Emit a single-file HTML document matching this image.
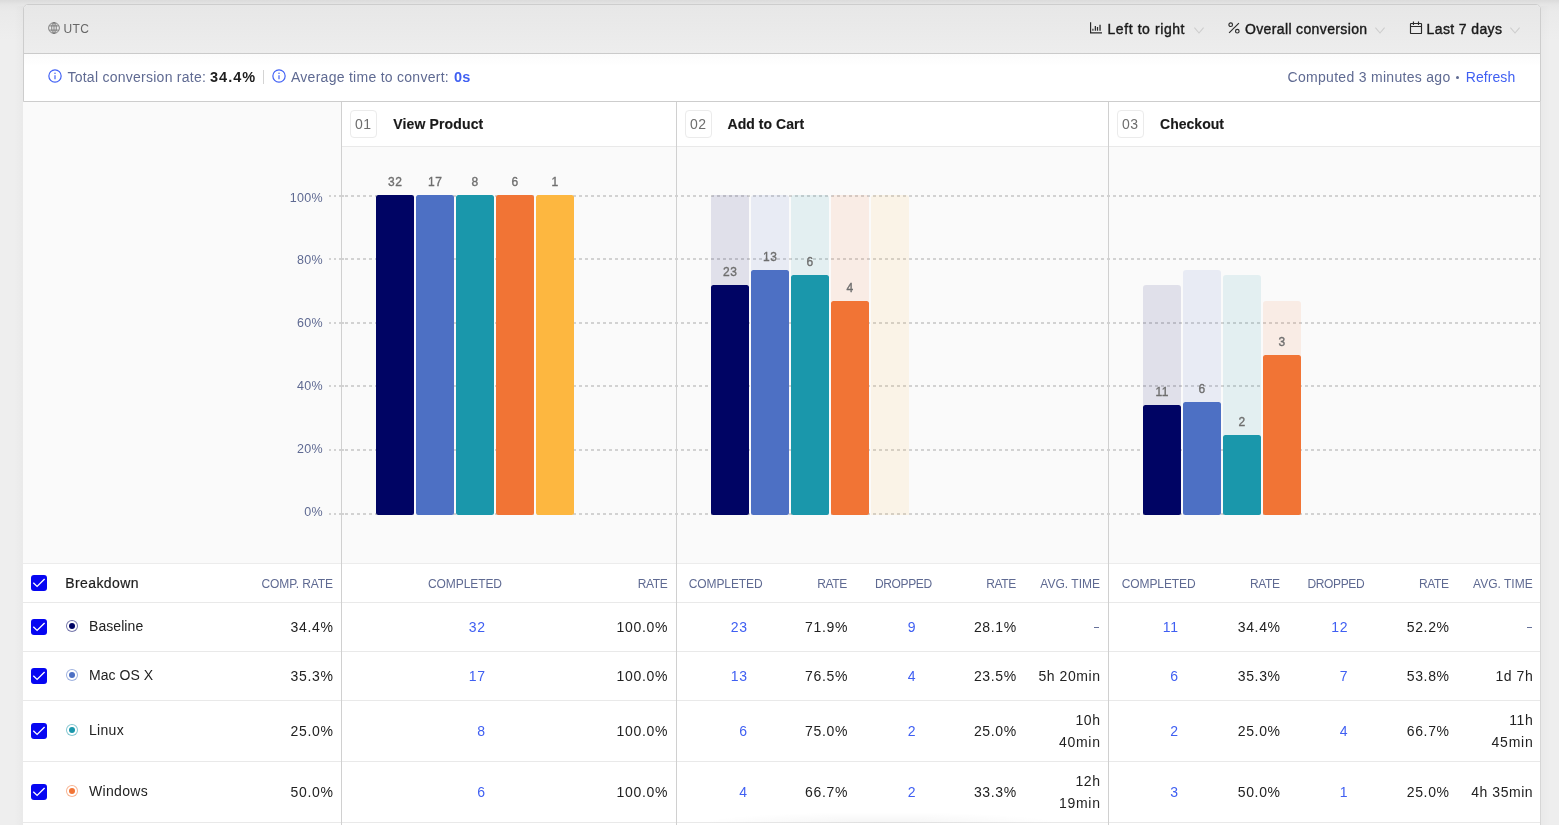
<!DOCTYPE html>
<html><head><meta charset="utf-8"><title>Funnel</title>
<style>
*{box-sizing:border-box;margin:0;padding:0}
html,body{width:1559px;height:825px;overflow:hidden}
body{background:#eeeeee;font-family:"Liberation Sans",sans-serif;font-size:14px;color:#222;position:relative}
.topshade{position:absolute;left:0;top:0;width:1559px;height:40px;background:linear-gradient(#dbdbdb 0,#e6e6e6 5px,#eaeaea 12px,#eeeeee 40px)}
.lshade{position:absolute;left:14px;top:6px;width:9px;height:830px;background:linear-gradient(to right,rgba(0,0,0,0),rgba(0,0,0,.02))}
.rshade{position:absolute;left:1541px;top:6px;width:9px;height:830px;background:linear-gradient(to left,rgba(0,0,0,0),rgba(0,0,0,.02))}
.card{position:absolute;left:24px;top:5px;width:1516px;height:830px}
.topbox{position:absolute;left:-1px;top:-1px;width:1518px;height:98px;border:1px solid #cdcdcd;border-radius:5px 5px 0 0;background:#fff;overflow:hidden}
.abs,.t{position:absolute;white-space:nowrap}
.txt{position:absolute;left:0;top:0;width:1516px;height:830px;will-change:transform}
.hdr{position:absolute;left:0;top:0;width:1516px;height:49px;background:linear-gradient(#e7e7e7,#ededed);border-bottom:1px solid #cacaca}
.stats{position:absolute;left:0;top:49px;width:1516px;height:47px;background:linear-gradient(#fbfbfb,#fff 12px)}
.chartbg{position:absolute;left:-1px;top:97px;width:1517px;height:462px;background:#fafafa;border-bottom:1px solid #ececec}
.rborder{position:absolute;left:1516px;top:97px;width:1px;height:740px;background:#d6d6d6}
.vline{position:absolute;top:97px;width:1px;height:760px;background:#d0d0d0}
.stephead{position:absolute;top:97px;height:45px;background:#fff;border-bottom:1px solid #e9e9e9}
.num{position:absolute;width:27px;height:28px;border:1px solid #ebebeb;border-radius:4px;background:#fff}
.grid{position:absolute;height:2px;background:repeating-linear-gradient(to right,#d2d2d2 0,#d2d2d2 3px,transparent 3px,transparent 6px)}
.gd{position:absolute;width:2px;height:2px;background:#d2d2d2}
.bar{position:absolute;width:38px;border-radius:2.5px}
.bk{position:absolute;width:38px;border-radius:3px 3px 0 0;opacity:.10}
.row{position:absolute;left:-1px;width:1517px;border-bottom:1px solid #e9e9e9;background:#fff}
.cb{position:absolute;width:16px;height:16px;border-radius:3px;background:#0606f2}
.cb svg{position:absolute;left:0;top:0}
.dot{position:absolute;width:12px;height:12px;border-radius:50%;border:1px solid;background:#fff}
.dot i{position:absolute;left:2px;top:2px;width:6px;height:6px;border-radius:50%}
/* text classes */
.hb{font-size:14px;line-height:20px;color:#1a1a1a;-webkit-text-stroke:.4px #1a1a1a}
.utc{font-size:12px;line-height:16px;color:#666}
.st{font-size:14px;line-height:20px}
.nm{font-size:14px;line-height:24px;color:#6e6e6e}
.stitle{font-weight:bold;font-size:14px;line-height:20px;color:#1a1a1a;-webkit-text-stroke:.15px #1a1a1a}
.ylab{font-size:12.5px;line-height:16px;color:#5f6a92}
.blab{font-size:12px;line-height:14px;color:#6e6e6e;-webkit-text-stroke:.35px #6e6e6e}
.th{font-size:12px;line-height:16px;color:#5f6a92}
.td{font-size:14px;line-height:22px;color:#222}
.bd{font-size:14px;line-height:20px;color:#1d1d1d;-webkit-text-stroke:.2px #1d1d1d}
.b{font-weight:bold;color:#1d1d1d}
.mut{color:#5f6a92}
.lk{color:#3f5ff2}
.sb{font-size:14.5px}
</style></head>
<body>
<div class="topshade"></div><div class="lshade"></div><div class="rshade"></div>
<div class="card">
<div class="topbox"><div class="hdr"></div><div class="stats"></div></div><div class="chartbg"></div><div class="rborder"></div>
<svg class="abs" style="left:24px;top:17px" width="12" height="12" viewBox="0 0 12 12" fill="none" stroke="#707070" stroke-width="0.85"><circle cx="6" cy="6" r="5.4"/><ellipse cx="6" cy="6" rx="2.3" ry="5.4"/><path d="M1.3 3.9h9.4M1.3 8.1h9.4M6 .6v10.8"/></svg>
<svg class="abs" style="left:1066px;top:17px" width="12" height="12" viewBox="0 0 12 12" fill="none" stroke="#2a2a2a"><path d="M0.55 0.3V10.85H12" stroke-width="1.25"/><path d="M2.9 8.8V6.8" stroke-width="1.5" stroke="#555"/><path d="M5.35 8.8V4.1M7.5 8.8V5.1" stroke-width="1.25"/><path d="M10.05 8.8V2.7" stroke-width="1.7" stroke="#555"/></svg>
<svg class="abs" style="left:1170px;top:21.5px" width="10" height="7" viewBox="0 0 10 7" fill="none" stroke="#cdcdcd" stroke-width="1.1"><path d="M0.4 0.6L5 6L9.6 0.6"/></svg>
<svg class="abs" style="left:1204px;top:17px" width="12" height="12" viewBox="0 0 12 12" fill="none" stroke="#2a2a2a" stroke-width="1.15"><circle cx="2.7" cy="2.7" r="1.8"/><circle cx="9.3" cy="9.2" r="1.8"/><path d="M1.1 10.8L10.9 1.1"/></svg>
<svg class="abs" style="left:1351.3px;top:21.5px" width="10" height="7" viewBox="0 0 10 7" fill="none" stroke="#cdcdcd" stroke-width="1.1"><path d="M0.4 0.6L5 6L9.6 0.6"/></svg>
<svg class="abs" style="left:1385px;top:16px" width="14" height="14" viewBox="0 0 14 14" fill="none" stroke="#2a2a2a" stroke-width="1.15"><rect x="1.5" y="2.5" width="11" height="10" rx="0.6"/><path d="M1.5 5.5H12.5M4.45 0.5V3.9M9.5 0.5V3.9"/></svg>
<svg class="abs" style="left:1486.3px;top:21.5px" width="10" height="7" viewBox="0 0 10 7" fill="none" stroke="#cdcdcd" stroke-width="1.1"><path d="M0.4 0.6L5 6L9.6 0.6"/></svg>
<svg class="abs" style="left:24px;top:64px" width="14" height="14" viewBox="0 0 14 14" fill="none" stroke="#4262f5" stroke-width="1.2"><circle cx="7" cy="7" r="6.15"/><path d="M7 6.2V10.3" stroke-width="1.2"/><circle cx="7" cy="4.2" r="0.75" fill="#3f5ff2" stroke="none"/></svg>
<div class="abs" style="left:239px;top:65px;width:1px;height:14px;background:#d4d4d4"></div>
<svg class="abs" style="left:248px;top:64px" width="14" height="14" viewBox="0 0 14 14" fill="none" stroke="#4262f5" stroke-width="1.2"><circle cx="7" cy="7" r="6.15"/><path d="M7 6.2V10.3" stroke-width="1.2"/><circle cx="7" cy="4.2" r="0.75" fill="#3f5ff2" stroke="none"/></svg>
<div class="abs" style="left:1431.5px;top:70.5px;width:3.5px;height:3.5px;border-radius:50%;background:#5f6a92"></div>
<div class="stephead" style="left:318px;width:334px"></div>
<div class="num" style="left:326px;top:105px"></div>
<div class="stephead" style="left:653px;width:431px"></div>
<div class="num" style="left:661px;top:105px"></div>
<div class="stephead" style="left:1085px;width:431px"></div>
<div class="num" style="left:1093px;top:105px"></div>
<div class="gd" style="left:305px;top:190px"></div>
<div class="gd" style="left:310px;top:190px"></div>
<div class="grid" style="left:315px;top:190px;width:1201px"></div>
<div class="gd" style="left:318px;top:190px"></div>
<div class="gd" style="left:305px;top:253px"></div>
<div class="gd" style="left:310px;top:253px"></div>
<div class="grid" style="left:315px;top:253px;width:1201px"></div>
<div class="gd" style="left:318px;top:253px"></div>
<div class="gd" style="left:305px;top:317px"></div>
<div class="gd" style="left:310px;top:317px"></div>
<div class="grid" style="left:315px;top:317px;width:1201px"></div>
<div class="gd" style="left:318px;top:317px"></div>
<div class="gd" style="left:305px;top:380px"></div>
<div class="gd" style="left:310px;top:380px"></div>
<div class="grid" style="left:315px;top:380px;width:1201px"></div>
<div class="gd" style="left:318px;top:380px"></div>
<div class="gd" style="left:305px;top:444px"></div>
<div class="gd" style="left:310px;top:444px"></div>
<div class="grid" style="left:315px;top:444px;width:1201px"></div>
<div class="gd" style="left:318px;top:444px"></div>
<div class="gd" style="left:305px;top:508px"></div>
<div class="gd" style="left:310px;top:508px"></div>
<div class="grid" style="left:315px;top:508px;width:1201px"></div>
<div class="gd" style="left:318px;top:508px"></div>
<div class="bar" style="left:352px;top:190px;height:320px;background:#000464"></div>
<div class="bar" style="left:392px;top:190px;height:320px;background:#4d70c4"></div>
<div class="bar" style="left:432px;top:190px;height:320px;background:#1a97ab"></div>
<div class="bar" style="left:472px;top:190px;height:320px;background:#f17435"></div>
<div class="bar" style="left:512px;top:190px;height:320px;background:#fdb740"></div>
<div class="bk" style="left:687px;top:190px;height:320px;background:#000464"></div>
<div class="bar" style="left:687px;top:280px;height:230px;background:#000464"></div>
<div class="bk" style="left:727px;top:190px;height:320px;background:#4d70c4"></div>
<div class="bar" style="left:727px;top:265px;height:245px;background:#4d70c4"></div>
<div class="bk" style="left:767px;top:190px;height:320px;background:#1a97ab"></div>
<div class="bar" style="left:767px;top:270px;height:240px;background:#1a97ab"></div>
<div class="bk" style="left:807px;top:190px;height:320px;background:#f17435"></div>
<div class="bar" style="left:807px;top:296px;height:214px;background:#f17435"></div>
<div class="bk" style="left:847px;top:190px;height:320px;background:#fdb740"></div>
<div class="bk" style="left:1119px;top:280px;height:230px;background:#000464"></div>
<div class="bar" style="left:1119px;top:400px;height:110px;background:#000464"></div>
<div class="bk" style="left:1159px;top:265px;height:245px;background:#4d70c4"></div>
<div class="bar" style="left:1159px;top:397px;height:113px;background:#4d70c4"></div>
<div class="bk" style="left:1199px;top:270px;height:240px;background:#1a97ab"></div>
<div class="bar" style="left:1199px;top:430px;height:80px;background:#1a97ab"></div>
<div class="bk" style="left:1239px;top:296px;height:214px;background:#f17435"></div>
<div class="bar" style="left:1239px;top:350px;height:160px;background:#f17435"></div>
<div class="row" style="top:559px;height:39px"></div>
<div class="cb" style="left:7px;top:570px"><svg width="16" height="16" viewBox="0 0 16 16" fill="none" stroke="#fff" stroke-width="1.35"><path d="M2.3 7.8L6.1 11.4L13.6 3.9"/></svg></div>
<div class="row" style="top:598px;height:49px"></div>
<div class="cb" style="left:7px;top:614px"><svg width="16" height="16" viewBox="0 0 16 16" fill="none" stroke="#fff" stroke-width="1.35"><path d="M2.3 7.8L6.1 11.4L13.6 3.9"/></svg></div>
<div class="dot" style="left:42px;top:615px;border-color:#00046488"><i style="background:#000464"></i></div>
<div class="abs" style="left:1069.9px;top:621.6px;width:5.4px;height:1.4px;background:#66719a"></div>
<div class="abs" style="left:1502.6px;top:621.6px;width:5.4px;height:1.4px;background:#66719a"></div>
<div class="row" style="top:647px;height:49px"></div>
<div class="cb" style="left:7px;top:663px"><svg width="16" height="16" viewBox="0 0 16 16" fill="none" stroke="#fff" stroke-width="1.35"><path d="M2.3 7.8L6.1 11.4L13.6 3.9"/></svg></div>
<div class="dot" style="left:42px;top:664px;border-color:#4d70c488"><i style="background:#4d70c4"></i></div>
<div class="row" style="top:696px;height:61px"></div>
<div class="cb" style="left:7px;top:718px"><svg width="16" height="16" viewBox="0 0 16 16" fill="none" stroke="#fff" stroke-width="1.35"><path d="M2.3 7.8L6.1 11.4L13.6 3.9"/></svg></div>
<div class="dot" style="left:42px;top:719px;border-color:#1a97ab88"><i style="background:#1a97ab"></i></div>
<div class="row" style="top:757px;height:61px"></div>
<div class="cb" style="left:7px;top:779px"><svg width="16" height="16" viewBox="0 0 16 16" fill="none" stroke="#fff" stroke-width="1.35"><path d="M2.3 7.8L6.1 11.4L13.6 3.9"/></svg></div>
<div class="dot" style="left:42px;top:780px;border-color:#f1743588"><i style="background:#f17435"></i></div>
<div class="row" style="top:818px;height:20px"></div>
<div class="abs" style="left:676px;top:807px;width:360px;height:11px;background:radial-gradient(ellipse 50% 100% at 50% 100%,rgba(0,0,0,.045),rgba(0,0,0,0))"></div>
<div class="rborder"></div>
<div class="vline" style="left:317px"></div>
<div class="vline" style="left:652px"></div>
<div class="vline" style="left:1084px"></div>
<div class="txt">
<span class="t utc" style="left:39.5px;top:16px;letter-spacing:0.41px;">UTC</span>
<span class="t hb" style="left:1083.5px;top:14px;letter-spacing:0.58px;">Left to right</span>
<span class="t hb" style="left:1221.0px;top:14px;letter-spacing:0.36px;">Overall conversion</span>
<span class="t hb" style="left:1402.6px;top:14px;letter-spacing:0.38px;">Last 7 days</span>
<span class="t st mut" style="left:43.4px;top:62px;letter-spacing:0.26px;">Total conversion rate:</span>
<span class="t st b sb" style="left:186.0px;top:62px;letter-spacing:1.02px;">34.4%</span>
<span class="t st mut" style="left:267.0px;top:62px;letter-spacing:0.27px;">Average time to convert:</span>
<span class="t st b lk sb" style="left:430.0px;top:62px;letter-spacing:0.20px;">0s</span>
<span class="t st mut" style="left:1263.5px;top:62px;letter-spacing:0.30px;">Computed 3 minutes ago</span>
<span class="t st lk" style="left:1441.8px;top:62px;letter-spacing:0.06px;">Refresh</span>
<span class="t nm" style="left:331.0px;top:107px;letter-spacing:0.42px;">01</span>
<span class="t stitle" style="left:369.3px;top:109px;letter-spacing:0.14px;">View Product</span>
<span class="t nm" style="left:666.0px;top:107px;letter-spacing:0.42px;">02</span>
<span class="t stitle" style="left:703.6px;top:109px;letter-spacing:0.03px;">Add to Cart</span>
<span class="t nm" style="left:1098.0px;top:107px;letter-spacing:0.42px;">03</span>
<span class="t stitle" style="left:1136.0px;top:109px;letter-spacing:0.03px;">Checkout</span>
<span class="t ylab" style="left:265.7px;top:185px;letter-spacing:0.30px;">100%</span>
<span class="t ylab" style="left:273.0px;top:247px;letter-spacing:0.30px;">80%</span>
<span class="t ylab" style="left:273.0px;top:310px;letter-spacing:0.30px;">60%</span>
<span class="t ylab" style="left:273.0px;top:373px;letter-spacing:0.30px;">40%</span>
<span class="t ylab" style="left:273.0px;top:436px;letter-spacing:0.30px;">20%</span>
<span class="t ylab" style="left:280.2px;top:499px;letter-spacing:0.30px;">0%</span>
<span class="t blab" style="left:364.0px;top:170px;letter-spacing:0.50px;">32</span>
<span class="t blab" style="left:404.0px;top:170px;letter-spacing:0.50px;">17</span>
<span class="t blab" style="left:447.6px;top:170px;letter-spacing:0.50px;">8</span>
<span class="t blab" style="left:487.6px;top:170px;letter-spacing:0.50px;">6</span>
<span class="t blab" style="left:527.6px;top:170px;letter-spacing:0.50px;">1</span>
<span class="t blab" style="left:699.0px;top:260px;letter-spacing:0.50px;">23</span>
<span class="t blab" style="left:739.0px;top:245px;letter-spacing:0.50px;">13</span>
<span class="t blab" style="left:782.6px;top:250px;letter-spacing:0.50px;">6</span>
<span class="t blab" style="left:822.6px;top:276px;letter-spacing:0.50px;">4</span>
<span class="t blab" style="left:1131.4px;top:380px;letter-spacing:0.50px;">11</span>
<span class="t blab" style="left:1174.6px;top:377px;letter-spacing:0.50px;">6</span>
<span class="t blab" style="left:1214.6px;top:410px;letter-spacing:0.50px;">2</span>
<span class="t blab" style="left:1254.6px;top:330px;letter-spacing:0.50px;">3</span>
<span class="t bd" style="left:41.2px;top:568px;letter-spacing:0.42px;">Breakdown</span>
<span class="t th" style="left:237.5px;top:571px;letter-spacing:-0.07px;">COMP. RATE</span>
<span class="t th" style="left:404.0px;top:571px;letter-spacing:-0.09px;">COMPLETED</span>
<span class="t th" style="left:613.7px;top:571px;letter-spacing:-0.38px;">RATE</span>
<span class="t th" style="left:664.7px;top:571px;letter-spacing:-0.09px;">COMPLETED</span>
<span class="t th" style="left:793.2px;top:571px;letter-spacing:-0.38px;">RATE</span>
<span class="t th" style="left:850.9px;top:571px;letter-spacing:-0.34px;">DROPPED</span>
<span class="t th" style="left:962.2px;top:571px;letter-spacing:-0.38px;">RATE</span>
<span class="t th" style="left:1016.3px;top:571px;letter-spacing:0.02px;">AVG. TIME</span>
<span class="t th" style="left:1097.7px;top:571px;letter-spacing:-0.09px;">COMPLETED</span>
<span class="t th" style="left:1226.0px;top:571px;letter-spacing:-0.38px;">RATE</span>
<span class="t th" style="left:1283.4px;top:571px;letter-spacing:-0.34px;">DROPPED</span>
<span class="t th" style="left:1395.0px;top:571px;letter-spacing:-0.38px;">RATE</span>
<span class="t th" style="left:1449.0px;top:571px;letter-spacing:0.02px;">AVG. TIME</span>
<span class="t td" style="left:65.0px;top:610px;letter-spacing:0.07px;">Baseline</span>
<span class="t td" style="left:266.6px;top:611px;letter-spacing:0.66px;">34.4%</span>
<span class="t td lk" style="left:444.8px;top:611px;letter-spacing:0.60px;">32</span>
<span class="t td" style="left:592.6px;top:611px;letter-spacing:0.68px;">100.0%</span>
<span class="t td lk" style="left:706.8px;top:611px;letter-spacing:0.60px;">23</span>
<span class="t td" style="left:781.0px;top:611px;letter-spacing:0.66px;">71.9%</span>
<span class="t td lk" style="left:883.7px;top:611px;">9</span>
<span class="t td" style="left:949.9px;top:611px;letter-spacing:0.66px;">28.1%</span>
<span class="t td lk" style="left:1138.8px;top:611px;letter-spacing:0.60px;">11</span>
<span class="t td" style="left:1213.7px;top:611px;letter-spacing:0.66px;">34.4%</span>
<span class="t td lk" style="left:1307.3px;top:611px;letter-spacing:0.60px;">12</span>
<span class="t td" style="left:1382.7px;top:611px;letter-spacing:0.66px;">52.2%</span>
<span class="t td" style="left:65.0px;top:659px;letter-spacing:0.03px;">Mac OS X</span>
<span class="t td" style="left:266.6px;top:660px;letter-spacing:0.66px;">35.3%</span>
<span class="t td lk" style="left:444.8px;top:660px;letter-spacing:0.60px;">17</span>
<span class="t td" style="left:592.6px;top:660px;letter-spacing:0.68px;">100.0%</span>
<span class="t td lk" style="left:706.8px;top:660px;letter-spacing:0.60px;">13</span>
<span class="t td" style="left:781.0px;top:660px;letter-spacing:0.66px;">76.5%</span>
<span class="t td lk" style="left:883.7px;top:660px;">4</span>
<span class="t td" style="left:949.9px;top:660px;letter-spacing:0.66px;">23.5%</span>
<span class="t td" style="left:1014.5px;top:660px;letter-spacing:0.55px;">5h 20min</span>
<span class="t td lk" style="left:1146.2px;top:660px;">6</span>
<span class="t td" style="left:1213.7px;top:660px;letter-spacing:0.66px;">35.3%</span>
<span class="t td lk" style="left:1315.7px;top:660px;">7</span>
<span class="t td" style="left:1382.7px;top:660px;letter-spacing:0.66px;">53.8%</span>
<span class="t td" style="left:1471.5px;top:660px;letter-spacing:0.54px;">1d 7h</span>
<span class="t td" style="left:65.0px;top:714px;letter-spacing:0.31px;">Linux</span>
<span class="t td" style="left:266.6px;top:715px;letter-spacing:0.66px;">25.0%</span>
<span class="t td lk" style="left:453.2px;top:715px;">8</span>
<span class="t td" style="left:592.6px;top:715px;letter-spacing:0.68px;">100.0%</span>
<span class="t td lk" style="left:715.2px;top:715px;">6</span>
<span class="t td" style="left:781.0px;top:715px;letter-spacing:0.66px;">75.0%</span>
<span class="t td lk" style="left:883.7px;top:715px;">2</span>
<span class="t td" style="left:949.9px;top:715px;letter-spacing:0.66px;">25.0%</span>
<span class="t td" style="left:1051.4px;top:704px;letter-spacing:0.60px;">10h</span>
<span class="t td" style="left:1034.9px;top:726px;letter-spacing:0.74px;">40min</span>
<span class="t td lk" style="left:1146.2px;top:715px;">2</span>
<span class="t td" style="left:1213.7px;top:715px;letter-spacing:0.66px;">25.0%</span>
<span class="t td lk" style="left:1315.7px;top:715px;">4</span>
<span class="t td" style="left:1382.7px;top:715px;letter-spacing:0.66px;">66.7%</span>
<span class="t td" style="left:1485.2px;top:704px;letter-spacing:0.60px;">11h</span>
<span class="t td" style="left:1467.6px;top:726px;letter-spacing:0.74px;">45min</span>
<span class="t td" style="left:65.0px;top:775px;letter-spacing:0.32px;">Windows</span>
<span class="t td" style="left:266.6px;top:776px;letter-spacing:0.66px;">50.0%</span>
<span class="t td lk" style="left:453.2px;top:776px;">6</span>
<span class="t td" style="left:592.6px;top:776px;letter-spacing:0.68px;">100.0%</span>
<span class="t td lk" style="left:715.2px;top:776px;">4</span>
<span class="t td" style="left:781.0px;top:776px;letter-spacing:0.66px;">66.7%</span>
<span class="t td lk" style="left:883.7px;top:776px;">2</span>
<span class="t td" style="left:949.9px;top:776px;letter-spacing:0.66px;">33.3%</span>
<span class="t td" style="left:1051.4px;top:765px;letter-spacing:0.60px;">12h</span>
<span class="t td" style="left:1034.9px;top:787px;letter-spacing:0.74px;">19min</span>
<span class="t td lk" style="left:1146.2px;top:776px;">3</span>
<span class="t td" style="left:1213.7px;top:776px;letter-spacing:0.66px;">50.0%</span>
<span class="t td lk" style="left:1315.7px;top:776px;">1</span>
<span class="t td" style="left:1382.7px;top:776px;letter-spacing:0.66px;">25.0%</span>
<span class="t td" style="left:1447.2px;top:776px;letter-spacing:0.55px;">4h 35min</span>
</div>
</div>
</body></html>
